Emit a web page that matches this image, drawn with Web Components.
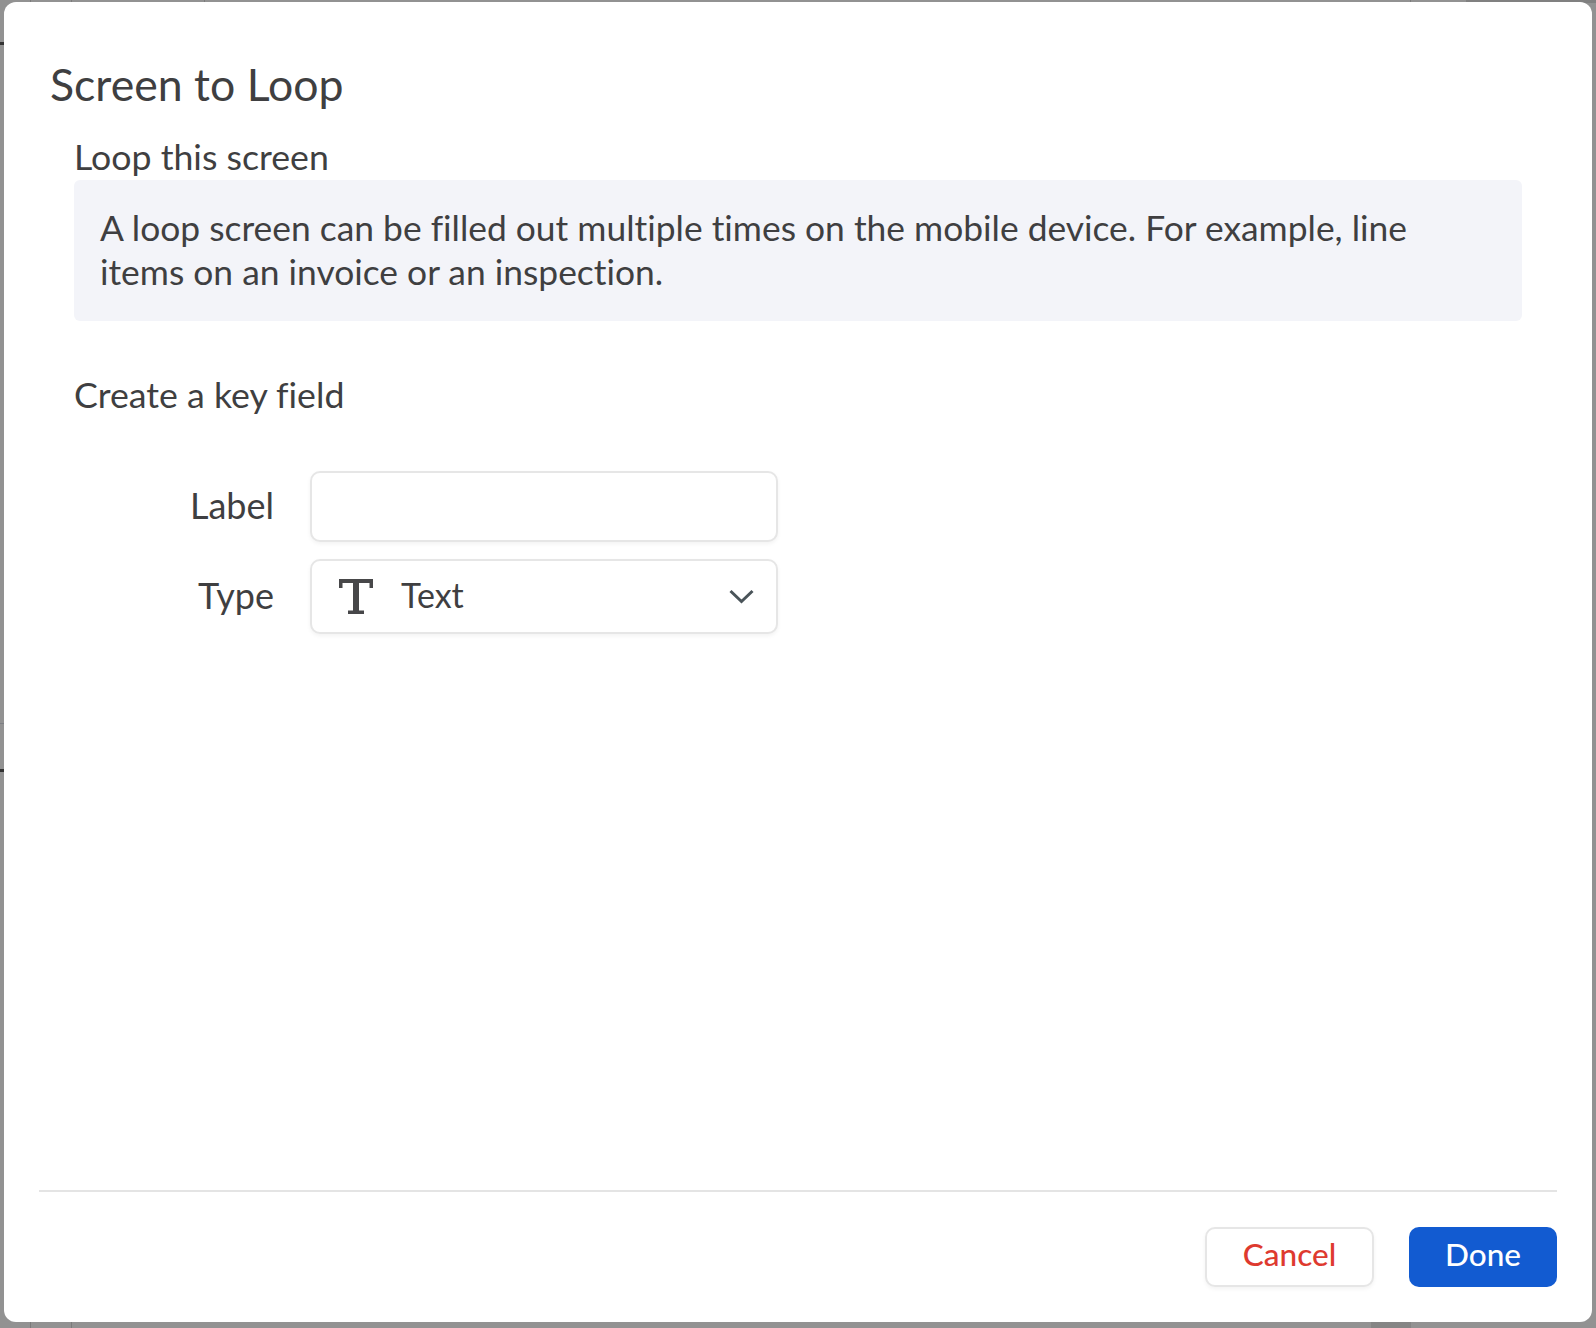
<!DOCTYPE html>
<html>
<head>
<meta charset="utf-8">
<title>Screen to Loop</title>
<style>
  html, body { margin: 0; height: 100%; }
  body {
    font-family: Lato, "Open Sans", sans-serif;
    font-variant-ligatures: none;
    color: #3f3f41;
    overflow: hidden;
    /* the dimmed page behind the modal: grid lines, two check ticks, dark patches */
    background-color: #929292;
    background-repeat: no-repeat;
    background-image:
      linear-gradient(#333, #333), linear-gradient(#333, #333),
      linear-gradient(#7d7f84, #7d7f84),
      linear-gradient(#808080, #808080), linear-gradient(#858585, #858585),
      linear-gradient(#7b7b7b, #7b7b7b), linear-gradient(#7b7b7b, #7b7b7b),
      linear-gradient(#7b7b7b, #7b7b7b), linear-gradient(#7b7b7b, #7b7b7b);
    background-size:
      4px 3px, 4px 3px,
      4px 1px,
      130px 3px, 40px 8px,
      1px 100%, 1px 100%, 1px 8px, 1px 8px;
    background-position:
      0 42px, 0 769px,
      0 723px,
      right 0 top 0, 1371px 1322px,
      30px 0, 71px 0, 204px 0, 1410px 0;
  }
</style>
</head>
<body>
<loop-dialog heading="Screen to Loop">
  <info-note title="Loop this screen">A loop screen can be filled out multiple times on the mobile device. For example, line items on an invoice or an inspection.</info-note>
  <key-field></key-field>
  <dialog-button slot="footer" kind="cancel">Cancel</dialog-button>
  <dialog-button slot="footer" kind="primary">Done</dialog-button>
</loop-dialog>
<script>
/* modal shell: heading, body slot, footer slot */
customElements.define("loop-dialog", class LoopDialog extends HTMLElement {
    constructor() {
	super();
	const shadow = this.attachShadow({ mode: "open" });
	shadow.innerHTML = `
<style>
  :host {
    display: flex;
    flex-direction: column;
    box-sizing: border-box;
    width: 1588px;
    height: 1320px;
    margin: 2px 0 0 4px;
    background: #fff;
    border-radius: 12px;
  }
  h1 {
    margin: 0;
    padding: 56px 0 0 46px;
    font-size: 44.6px;
    line-height: 52px;
    font-weight: 400;
  }
  main { flex: 1; padding: 0 70px; }
  footer {
    display: flex;
    justify-content: flex-end;
    gap: 35px;
    margin: 0 35px;
    padding: 35px 0;
    border-top: 2px solid #e4e4e4;
  }
</style>
<h1></h1>
<main><slot></slot></main>
<footer><slot name="footer"></slot></footer>
`;
	shadow.querySelector('h1').textContent = this.getAttribute('heading');
    }
});

/* titled grey note */
customElements.define("info-note", class InfoNote extends HTMLElement {
    constructor() {
	super();
	const shadow = this.attachShadow({ mode: "open" });
	shadow.innerHTML = `
<style>
  :host { display: block; }
  h2 {
    margin: 0;
    padding-top: 28px;
    font-size: 35.7px;
    line-height: 38px;
    font-weight: 400;
  }
  div {
    margin-top: 4px;
    padding: 26px 26px 27px;
    background: #f3f4f9;
    border-radius: 6px;
    font-size: 35.4px;
    line-height: 44px;
  }
</style>
<h2></h2>
<div><slot></slot></div>
`;
	shadow.querySelector('h2').textContent = this.getAttribute('title');
    }
});

/* key field form: label input and type select */
customElements.define("key-field", class KeyField extends HTMLElement {
    constructor() {
	super();
	const shadow = this.attachShadow({ mode: "open" });
	shadow.innerHTML = `
<style>
  :host { display: block; }
  h2 {
    margin: 0;
    padding: 55px 0 57px;
    font-size: 35.7px;
    line-height: 38px;
    font-weight: 400;
  }
  .form {
    display: grid;
    grid-template-columns: 200px 468px;
    column-gap: 36px;
    row-gap: 17px;
    align-items: center;
    font-size: 34px;
  }
  label { text-align: right; font-size: 36px; padding-bottom: 4px; }
  .box {
    box-sizing: border-box;
    height: 71px;
    background: #fff;
    border: 2px solid #e6e6e6;
    border-radius: 10px;
    box-shadow: 0 2px 4px rgba(0,0,0,.05);
  }
  .select {
    height: 75px;
    display: flex;
    align-items: center;
    padding: 0 22px 0 27px;
  }
  .select span { flex: 1; margin-left: 28px; padding-bottom: 4px; }
  svg { display: block; }
</style>
<h2>Create a key field</h2>
<div class="form">
  <label>Label</label>
  <div class="box"></div>
  <label>Type</label>
  <div class="box select">
    <svg width="34" height="35" viewBox="0 0 34 35">
      <path fill="#474749" d="M0 0H34V9H30.5V4H20V31.5H25V35H9V31.5H14V4H3.5V9H0Z"/>
    </svg>
    <span>Text</span>
    <svg width="25" height="15" viewBox="0 0 25 15">
      <path fill="none" stroke="#4a5459" stroke-width="3" d="M1.5 2 12.5 12.5 23.5 2"/>
    </svg>
  </div>
</div>
`;
    }
});

/* footer button */
customElements.define("dialog-button", class DialogButton extends HTMLElement {
    constructor() {
	super();
	const shadow = this.attachShadow({ mode: "open" });
	shadow.innerHTML = `
<style>
  :host {
    display: flex;
    align-items: center;
    justify-content: center;
    box-sizing: border-box;
    height: 60px;
    padding-bottom: 7px;
    border-radius: 10px;
    font-size: 31.5px;
    font-weight: 500;
  }
  :host([kind=cancel]) {
    width: 169px;
    background: #fff;
    color: #de3a2f;
    border: 2px solid #e6e6e6;
    box-shadow: 0 2px 4px rgba(0,0,0,.05);
  }
  :host([kind=primary]) {
    width: 148px;
    background: #125bd1;
    color: #fff;
  }
</style>
<slot></slot>
`;
    }
});
</script>
</body>
</html>
